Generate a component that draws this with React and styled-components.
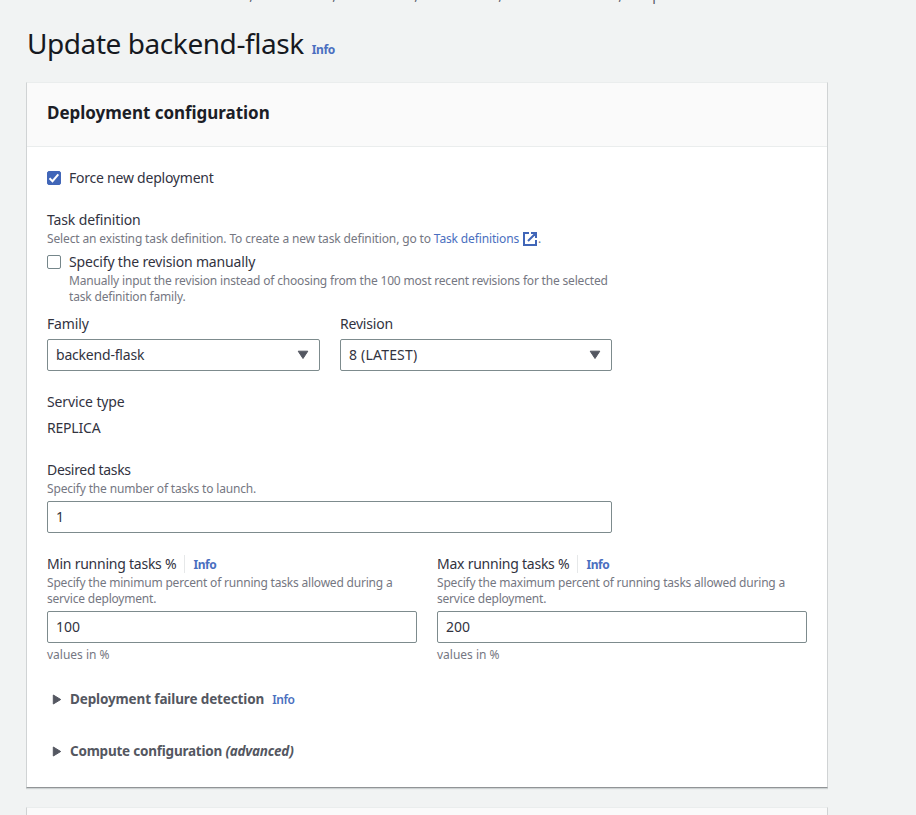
import React from "react";
import styled, { createGlobalStyle } from "styled-components";

const Global = createGlobalStyle`
  *, *::before, *::after { box-sizing: border-box; }
  html { height: 100%; overflow: hidden; }
  body {
    margin: 0; height: 815px; overflow: hidden; background: #f1f3f3;
    font-family: "Noto Sans", "Open Sans", sans-serif;
    font-size: 14px; line-height: 22px; color: #32333f;
  }
  h1, h2, p { margin: 0; }
`;

const Page = styled.main`
  display: flex; flex-direction: column;
  width: 802px; height: 815px; margin-left: 26px; overflow: hidden;
`;
const Notice = styled.div`
  height: 4px; flex: none; overflow: hidden; color: #5b5d69;
  display: grid; grid-template-columns: 227px 83px 82px 84px 120px 65px;
  grid-template-rows: 4px; align-items: end; justify-items: end;
`;
const NoticeText = styled.span`
  line-height: 22px; white-space: nowrap; margin-bottom: -2px;
`;
const Title = styled.h1`
  flex: none; display: flex; align-items: baseline; height: 78px; padding: 20px 0 0 1px;
  font-size: 28px; line-height: 38px; font-weight: 400; color: #16191f;
`;
const Txt = styled.span`
  letter-spacing: ${(p) => p.$track || 0}px;
`;
const InfoLink = styled.a`
  font-size: 12px; line-height: 20px; font-weight: ${(p) => p.$weight || 700};
  color: #4a6fc0; letter-spacing: -0.4px;
  padding-top: ${(p) => p.$drop || 0}px; margin-left: 8px;
`;
const Panel = styled.section`
  flex: none; background: #fff; height: ${(p) => p.$height}px;
  border: 1px solid #d0d3d4; border-top-color: #eaeded; border-bottom-color: #919496;
  box-shadow: 0 1px 1px rgba(0, 28, 36, 0.15);
  margin-bottom: 19px;
`;
const PanelHeader = styled.header`
  height: 64px; padding: 19px 20px; background: #fafafa; border-bottom: 1px solid #eaeded;
`;
const PanelTitle = styled.h2`
  font-size: 17px; line-height: 22px; font-weight: 700; color: #1c1e27; letter-spacing: -0.03px;
`;
const Body = styled.div`
  padding: 20px; display: flex; flex-direction: column;
`;
const Group = styled.div`
  display: flex; flex-direction: column; margin-top: ${(p) => p.$top || 0}px;
`;
const Label = styled.div`
  display: flex; align-items: center; height: 22px; white-space: nowrap;
  letter-spacing: ${(p) => p.$track || 0}px;
`;
const Hint = styled.p`
  font-size: 12px; line-height: 16px; color: #757782; white-space: nowrap;
  letter-spacing: ${(p) => p.$track ?? -0.18}px;
`;
const Link = styled.a`
  color: #4a6fc0;
`;
const External = styled.svg`
  width: 16px; height: 16px; vertical-align: -4px; margin: -2px 0 0 3px;
`;
const CheckRow = styled.div`
  display: flex; gap: 8px;
`;
const Box = styled.span`
  width: 14px; height: 14px; flex: none; margin-top: 4px; border-radius: 2px; display: flex;
  border: 1px solid ${(p) => (p.$on ? "#4166b8" : "#75868a")};
  background: ${(p) => (p.$on ? "#4166b8" : "#fff")};
`;
const SelectRow = styled.div`
  display: grid; grid-template-columns: 273px 272px; column-gap: 20px; margin-top: 8px;
`;
const Control = styled.div`
  display: flex; align-items: center; justify-content: space-between;
  width: ${(p) => p.$width || "100%"}; height: 32px; margin-top: 4px; padding: 0 10px 0 8px;
  border: 1px solid #7d8b8d; border-radius: 2px; background: #fff;
`;
const Percentages = styled.div`
  display: grid; grid-template-columns: 370px 370px; column-gap: 20px; margin-top: 20px;
`;
const Divider = styled.i`
  width: 1px; height: 18px; background: #e6e8e9; margin-left: 8px;
`;
const Expander = styled.div`
  display: flex; align-items: center; height: 22px; padding-left: 5px;
  margin-top: ${(p) => p.$top}px; font-size: 13.5px; font-weight: 700; color: #545761;
`;
const Arrow = styled.svg`
  width: 10px; height: 11px; margin-right: 8px;
`;

const Caret = () => (
  <svg width="12" height="10" viewBox="0 0 12 10">
    <path d="M1.2 1.2h9.6L6 8.5z" fill="#545761" stroke="#545761" strokeLinejoin="round" />
  </svg>
);
const Check = ({ on, label, track, children }) => (
  <CheckRow>
    <Box $on={on}>
      {on && (
        <svg width="12" height="12" viewBox="0 0 12 12">
          <path d="M1.5 6.2 4.5 9.2 10.3 2.4" fill="none" stroke="#fff" strokeWidth="2" />
        </svg>
      )}
    </Box>
    <div>
      <Label $track={track}>{label}</Label>
      {children}
    </div>
  </CheckRow>
);
const Select = ({ label, value, t1, t2 }) => (
  <div>
    <Label $track={t1}>{label}</Label>
    <Control><Txt $track={t2}>{value}</Txt><Caret /></Control>
  </div>
);
const Percent = ({ name, word, value }) => (
  <div>
    <Label><Txt $track={-0.24}>{name} running tasks %</Txt><Divider /><InfoLink $drop={2}>Info</InfoLink></Label>
    <Hint $track={-0.2}>Specify the {word} percent of running tasks allowed during a<br />service deployment.</Hint>
    <Control>{value}</Control>
    <Group $top={4}><Hint $track={0}>values in %</Hint></Group>
  </div>
);
const Expand = ({ top, children }) => (
  <Expander $top={top}>
    <Arrow viewBox="0 0 10 11"><path d="M1.3 1 8.7 5.5l-7.4 4.5z" fill="#545761" stroke="#545761" strokeLinejoin="round" /></Arrow>
    {children}
  </Expander>
);

const topics = ["Select a resource to see related tasks,", "clusters,", "services,", "instances,", "load balancers,", "or reports"];

export default function App() {
  return (
    <>
      <Global />
      <Page>
        <Notice>{topics.map((t) => <NoticeText key={t}>{t}</NoticeText>)}</Notice>
        <Title><Txt $track={-0.43}>Update backend-flask</Txt><InfoLink>Info</InfoLink></Title>
        <Panel $height={706}>
          <PanelHeader><PanelTitle>Deployment configuration</PanelTitle></PanelHeader>
          <Body>
            <Check on label="Force new deployment" track={-0.23} />
            <Group $top={20}>
              <Label $track={-0.12}>Task definition</Label>
              <Hint $track={-0.14}>
                Select an existing task definition. To create a new task definition, go to <Link>Task definitions</Link>
                <External viewBox="0 0 16 16">
                  <path d="M7 2H2v12h12V9M9 2h5v5M13.5 2.5 6 10" fill="none" stroke="#4166b8" strokeWidth="2" />
                </External>.
              </Hint>
            </Group>
            <Group $top={4}>
              <Check label="Specify the revision manually" track={-0.16}>
                <Hint>Manually input the revision instead of choosing from the 100 most recent revisions for the selected<br />task definition family.</Hint>
              </Check>
            </Group>
            <SelectRow>
              <Select label="Family" value="backend-flask" t1={-0.15} t2={-0.2} />
              <Select label="Revision" value="8 (LATEST)" t1={-0.2} t2={0.2} />
            </SelectRow>
            <Group $top={20}>
              <Label $track={-0.12}>Service type</Label>
              <Group $top={4}><Label $track={-0.2}>REPLICA</Label></Group>
            </Group>
            <Group $top={20}>
              <Label $track={-0.32}>Desired tasks</Label>
              <Hint $track={-0.16}>Specify the number of tasks to launch.</Hint>
              <Control $width="565px">1</Control>
            </Group>
            <Percentages>
              <Percent name="Min" word="minimum" value="100" />
              <Percent name="Max" word="maximum" value="200" />
            </Percentages>
            <Expand top={25}><Txt $track={-0.13}>Deployment failure detection</Txt><InfoLink $weight={600} $drop={2}>Info</InfoLink></Expand>
            <Expand top={30}><Txt $track={-0.22}>Compute configuration <em>(advanced)</em></Txt></Expand>
          </Body>
        </Panel>
        <Panel $height={100}><PanelHeader /></Panel>
      </Page>
    </>
  );
}
